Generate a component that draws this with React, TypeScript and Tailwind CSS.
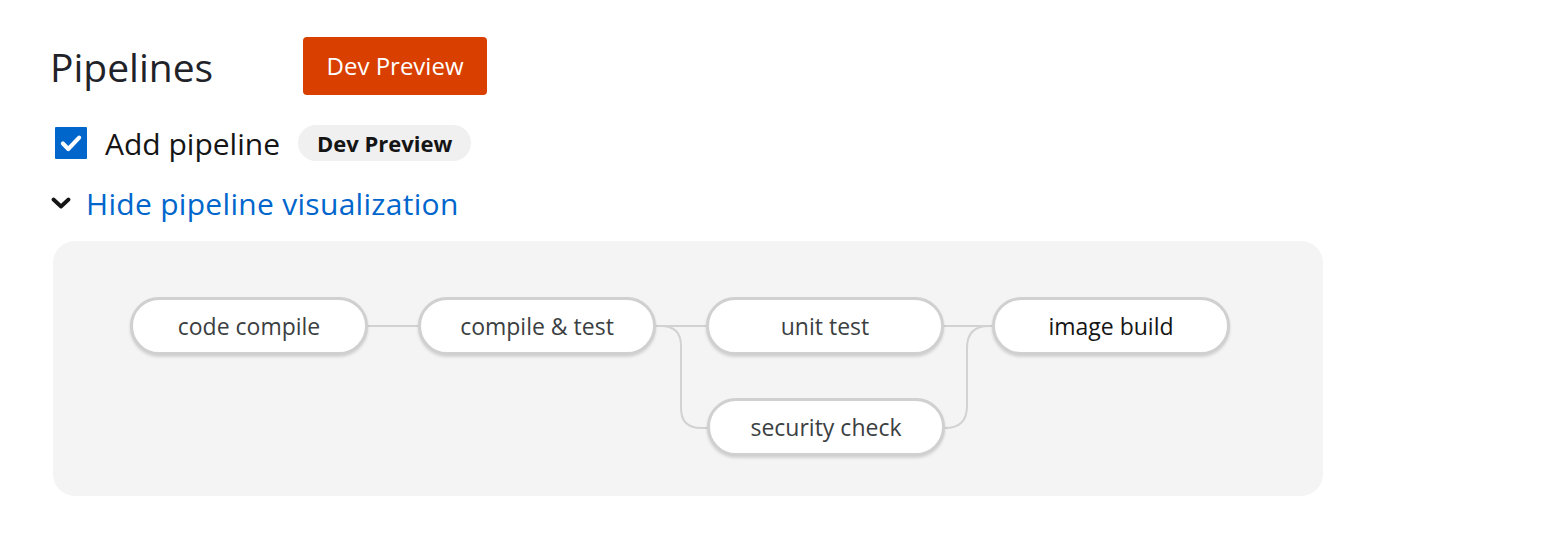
import React from 'react'

type Node = { label: string; left: number; top: number; dark?: boolean }

const nodes: Node[] = [
  { label: 'code compile', left: 77, top: 56 },
  { label: 'compile & test', left: 365, top: 56 },
  { label: 'unit test', left: 653, top: 56 },
  { label: 'image build', left: 939, top: 56, dark: true },
  { label: 'security check', left: 654, top: 157 },
]

function PipelineNode({ label, left, top, dark }: Node) {
  return (
    <div
      className="absolute flex h-[58px] w-[238px] items-center justify-center rounded-full border-[3px] border-[#d0d0d0] bg-white shadow-[0_2px_3px_rgba(0,0,0,0.14)]"
      style={{ left, top }}
    >
      <span className={`text-[23px] ${dark ? 'text-[#151515]' : 'text-[#3c3f42]'}`}>{label}</span>
    </div>
  )
}

export default function App() {
  return (
    <div className="min-h-[545px] bg-white pl-[50px] pt-[37px] font-['Open_Sans',sans-serif]">
      {/* title row */}
      <div className="flex h-[58px] items-center">
        <h1 className="w-[253px] text-[39px] font-normal leading-none text-[#1f2329]">Pipelines</h1>
        <div className="flex h-[58px] w-[184px] items-center justify-center rounded-[4px] bg-[#d94000] text-[24px] text-white">
          Dev Preview
        </div>
      </div>

      {/* checkbox row */}
      <div className="mt-[30px] flex h-[36px] items-center pl-[5px]">
        <div className="flex h-[32px] w-[32px] items-center justify-center rounded-[1px] bg-[#0066cc]">
          <svg viewBox="0 0 24 24" className="h-[26px] w-[26px]" fill="none" stroke="white" strokeWidth="3.8" strokeLinecap="round" strokeLinejoin="round">
            <path d="M4.5 12.5l5 5 10-10.5" />
          </svg>
        </div>
        <span className="ml-[18px] text-[30px] text-[#151515]">Add pipeline</span>
        <span className="ml-[18px] flex h-[36px] items-center rounded-full bg-[#f0f0f0] px-[19px] text-[22px] font-bold text-[#151515]">
          Dev Preview
        </span>
      </div>

      {/* toggle row */}
      <div className="mt-[22px] flex h-[40px] items-center">
        <svg viewBox="0 0 20 12" className="ml-[1px] h-[12px] w-[20px]" fill="none" stroke="#151515" strokeWidth="3.8" strokeLinecap="round" strokeLinejoin="round">
          <path d="M2.5 2.5l7.5 7 7.5-7" />
        </svg>
        <span className="ml-[15px] text-[30px] tracking-[0.3px] text-[#0066cc]">Hide pipeline visualization</span>
      </div>

      {/* visualization */}
      <div className="relative ml-[3px] mt-[18px] h-[255px] w-[1270px] rounded-[22px] bg-[#f4f4f4]">
        <svg className="absolute left-0 top-0" width="1270" height="255" fill="none" stroke="#d2d2d2" strokeWidth="2">
          <path d="M315 85H365" />
          <path d="M603 85H653" />
          <path d="M603 85H608Q628 85 628 105V167Q628 187 648 187H654" />
          <path d="M891 85H939" />
          <path d="M892 187Q914 187 914 165V107Q914 85 936 85H939" />
        </svg>
        {nodes.map((n) => (
          <PipelineNode key={n.label} {...n} />
        ))}
      </div>
    </div>
  )
}
